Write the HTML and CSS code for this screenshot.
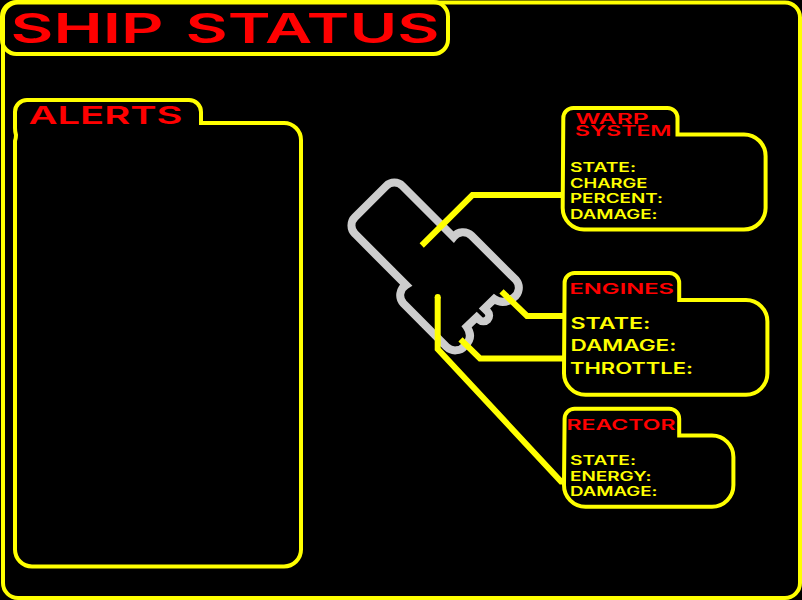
FILE: index.html
```html
<!DOCTYPE html>
<html lang="en">
<head>
<meta charset="utf-8">
<title>Ship Status</title>
<link rel="stylesheet" href="styles.css">
</head>
<body>
<main class="console">
  <svg class="console-frame" viewBox="0 0 802 600" aria-hidden="true">
    <rect class="line" x="3" y="2.4" width="797" height="595.6" rx="15"/>
  </svg>
  <header class="title">
    <svg width="452" height="58" viewBox="0 0 452 58">
      <rect class="line" x="2" y="2" width="446" height="52" rx="14.5"/>
      <g class="heading title-text">
        <text x="10.500" y="43" textLength="153" lengthAdjust="spacingAndGlyphs">SHIP</text>
        <text x="185.500" y="43" textLength="254" lengthAdjust="spacingAndGlyphs">STATUS</text>
      </g>
    </svg>
  </header>
  <div class="content">
    <section class="alerts">
      <svg width="290" height="472" viewBox="13 98 290 472">
        <path class="line" d="M15 112A12 12 0 0 1 27 100H189A12 12 0 0 1 201 112V123H284A17 17 0 0 1 301 140V549.5A17 17 0 0 1 284 566.500H32A17 17 0 0 1 15 549.500V141Q16 138 16 135Q15 132 15 128Z"/>
        <text class="heading alerts-text" x="28.500" y="124" textLength="154" lengthAdjust="spacingAndGlyphs">ALERTS</text>
      </svg>
    </section>
    <section class="schematic">
      <svg width="220" height="330" viewBox="340 170 220 330">
        <path class="hull" d="M453.500 237L402.500 186A11.500 11.500 0 0 0 386.200 186L355 217.200A11.500 11.500 0 0 0 355 233.800L406 285A12 12 0 0 0 403.500 303.500L446.500 346.800A12.500 12.500 0 0 0 465 345.700Q474 337 466.700 326.700L476.700 317.200L479.400 319.800A5.800 5.800 0 0 0 487.500 311.500L484.500 308.500L494.300 299Q503.500 305.500 513.800 297.500A12 12 0 0 0 516 280L471.500 235.700A12 12 0 0 0 453.500 237Z"/>
        <g class="lead">
          <path d="M421.700 245.500L472.400 195H563"/>
          <path d="M501.500 291.300L527 316H563"/>
          <path d="M460.500 339.300L480 358.400H563"/>
          <path d="M437.700 297V349L561 481.500H563"/>
          <circle class="lead-end" cx="437.700" cy="297" r="3"/>
        </g>
      </svg>
    </section>
    <div class="systems">
      <section class="system warp">
        <svg width="210" height="127" viewBox="560 105 210 127">
          <path class="line" d="M563.300 118A10 10 0 0 1 573.300 108H667.500A10 10 0 0 1 677.500 118V134.500H744A21.600 21.600 0 0 1 765.600 156V208A21.600 21.600 0 0 1 744 229.500H584A21.400 21.400 0 0 1 562.700 208Z"/>
          <g class="heading warp-heading">
            <text x="575.500" y="124" textLength="73" lengthAdjust="spacingAndGlyphs">WARP</text>
            <text x="575" y="136" textLength="96.500" lengthAdjust="spacingAndGlyphs">SYSTEM</text>
          </g>
          <g class="label small">
            <text x="570" y="172" textLength="66" lengthAdjust="spacingAndGlyphs">STATE:</text>
            <text x="570" y="187.500" textLength="77.500" lengthAdjust="spacingAndGlyphs">CHARGE</text>
            <text x="570" y="203" textLength="93" lengthAdjust="spacingAndGlyphs">PERCENT:</text>
            <text x="570" y="218.500" textLength="87.500" lengthAdjust="spacingAndGlyphs">DAMAGE:</text>
          </g>
        </svg>
      </section>
      <section class="system engines">
        <svg width="210" height="127" viewBox="560 270 210 127">
          <path class="line" d="M564.600 283A10 10 0 0 1 574.600 273H669.200A10 10 0 0 1 679.200 283V300H746A21.400 21.400 0 0 1 767.400 321.500V373A21.500 21.500 0 0 1 746 394.700H585.500A21.500 21.500 0 0 1 564 373Z"/>
          <text class="heading engines-heading" x="569.500" y="294" textLength="104.500" lengthAdjust="spacingAndGlyphs">ENGINES</text>
          <g class="label large">
            <text x="570.500" y="329" textLength="80" lengthAdjust="spacingAndGlyphs">STATE:</text>
            <text x="570.500" y="351.300" textLength="106" lengthAdjust="spacingAndGlyphs">DAMAGE:</text>
            <text x="570" y="373.900" textLength="123" lengthAdjust="spacingAndGlyphs">THROTTLE:</text>
          </g>
        </svg>
      </section>
      <section class="system reactor">
        <svg width="210" height="103" viewBox="560 406 210 103">
          <path class="line" d="M564.600 418.700A10 10 0 0 1 574.600 408.700H669.200A10 10 0 0 1 679.200 418.700V435.500H712A21.400 21.400 0 0 1 733.400 457V485A21.500 21.500 0 0 1 712 506.700H585.500A21.500 21.500 0 0 1 564 485Z"/>
          <text class="heading reactor-heading" x="566.500" y="429.700" textLength="109" lengthAdjust="spacingAndGlyphs">REACTOR</text>
          <g class="label small">
            <text x="570" y="465" textLength="66" lengthAdjust="spacingAndGlyphs">STATE:</text>
            <text x="570" y="480.500" textLength="81.500" lengthAdjust="spacingAndGlyphs">ENERGY:</text>
            <text x="570" y="495.800" textLength="87.500" lengthAdjust="spacingAndGlyphs">DAMAGE:</text>
          </g>
        </svg>
      </section>
    </div>
  </div>
</main>
</body>
</html>
```

FILE: styles.css
```css
* { box-sizing: border-box; }

body {
  margin: 0;
  background: #000;
  font-family: Inter, "Liberation Sans", sans-serif;
  font-feature-settings: "calt" 0;
}

svg { display: block; overflow: visible; }

.console {
  position: relative;
  width: 802px;
  height: 600px;
  overflow: hidden;
  background: #000;
}

.console-frame {
  position: absolute;
  inset: 0;
  width: 802px;
  height: 600px;
}

.title { height: 58px; }

.content {
  display: flex;
  align-items: flex-start;
  padding: 40px 0 0 13px;
}

.alerts { width: 290px; }

.schematic {
  width: 220px;
  margin: 72px 0 0 37px;
}

.systems {
  display: flex;
  flex-direction: column;
  width: 210px;
  margin-top: 7px;
}

.engines { margin-top: 38px; }
.reactor { margin-top: 9px; }

.line {
  fill: none;
  stroke: #ff0;
  stroke-width: 4;
}

.hull {
  fill: none;
  stroke: #cdcdcd;
  stroke-width: 8;
}

.lead {
  fill: none;
  stroke: #ff0;
  stroke-width: 6;
}

.lead-end { fill: #ff0; stroke: none; }

.heading { fill: #f00; font-weight: 600; }
.label { fill: #ff0; font-weight: 600; }

.title-text { font-size: 40.500px; }
.alerts-text { font-size: 24.500px; }
.warp-heading { font-size: 14.500px; }
.engines-heading { font-size: 14.500px; }
.reactor-heading { font-size: 14.500px; }
.small { font-size: 12.800px; }
.large { font-size: 15.500px; }
```
